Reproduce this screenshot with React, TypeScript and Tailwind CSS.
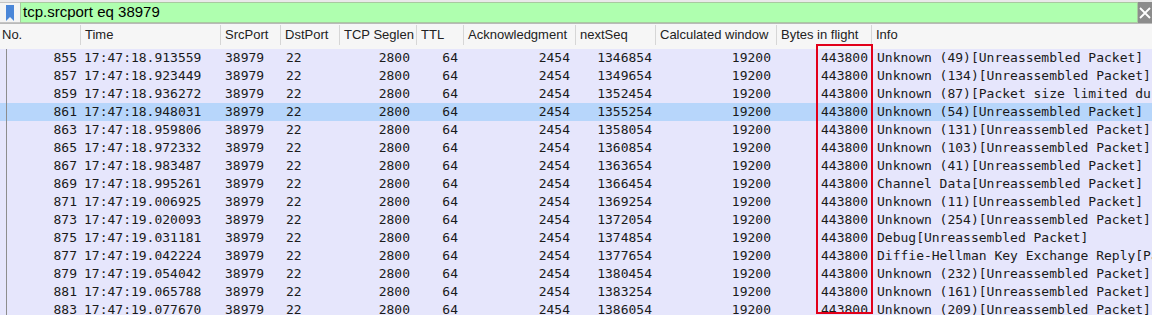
import React from "react";

type Packet = {
  no: number;
  time: string;
  ack: number;
  next: number;
  info: string;
};

const packets: Packet[] = [
  { no: 855, time: "17:47:18.913559", ack: 2454, next: 1346854, info: "Unknown (49)[Unreassembled Packet]" },
  { no: 857, time: "17:47:18.923449", ack: 2454, next: 1349654, info: "Unknown (134)[Unreassembled Packet]" },
  { no: 859, time: "17:47:18.936272", ack: 2454, next: 1352454, info: "Unknown (87)[Packet size limited du" },
  { no: 861, time: "17:47:18.948031", ack: 2454, next: 1355254, info: "Unknown (54)[Unreassembled Packet]" },
  { no: 863, time: "17:47:18.959806", ack: 2454, next: 1358054, info: "Unknown (131)[Unreassembled Packet]" },
  { no: 865, time: "17:47:18.972332", ack: 2454, next: 1360854, info: "Unknown (103)[Unreassembled Packet]" },
  { no: 867, time: "17:47:18.983487", ack: 2454, next: 1363654, info: "Unknown (41)[Unreassembled Packet]" },
  { no: 869, time: "17:47:18.995261", ack: 2454, next: 1366454, info: "Channel Data[Unreassembled Packet]" },
  { no: 871, time: "17:47:19.006925", ack: 2454, next: 1369254, info: "Unknown (11)[Unreassembled Packet]" },
  { no: 873, time: "17:47:19.020093", ack: 2454, next: 1372054, info: "Unknown (254)[Unreassembled Packet]" },
  { no: 875, time: "17:47:19.031181", ack: 2454, next: 1374854, info: "Debug[Unreassembled Packet]" },
  { no: 877, time: "17:47:19.042224", ack: 2454, next: 1377654, info: "Diffie-Hellman Key Exchange Reply[Pa" },
  { no: 879, time: "17:47:19.054042", ack: 2454, next: 1380454, info: "Unknown (232)[Unreassembled Packet]" },
  { no: 881, time: "17:47:19.065788", ack: 2454, next: 1383254, info: "Unknown (161)[Unreassembled Packet]" },
  { no: 883, time: "17:47:19.077670", ack: 2454, next: 1386054, info: "Unknown (209)[Unreassembled Packet]" },
];

const columns = [
  { label: "No.", w: "w-[80px]" },
  { label: "Time", w: "w-[140px]" },
  { label: "SrcPort", w: "w-[60px]" },
  { label: "DstPort", w: "w-[59px]" },
  { label: "TCP Seglen", w: "w-[77px]" },
  { label: "TTL", w: "w-[47px]" },
  { label: "Acknowledgment", w: "w-[112px]" },
  { label: "nextSeq", w: "w-[80px]" },
  { label: "Calculated window", w: "w-[121px]" },
  { label: "Bytes in flight", w: "w-[95px]" },
  { label: "Info", w: "flex-1" },
];

const FilterBar = () => (
  <div className="flex h-[24px] items-stretch border-b border-[#b9b9b9] bg-[#e9e9e9] pt-[2px]">
    <div className="flex w-[20px] items-center justify-center border-y border-[#c4c4c4] bg-[#f4f4f4]">
      <svg width="8" height="16" viewBox="0 0 8 16">
        <path d="M0 0 H8 V16 L4 12 L0 16 Z" fill="#4a86d8" />
      </svg>
    </div>
    <div className="flex flex-1 items-center border border-[#a9c9a0] bg-[#afffaf] pl-[2px] text-[15px] text-black">
      tcp.srcport eq 38979
    </div>
    <div className="flex w-[14px] items-center justify-center bg-[#8c8c8c]">
      <svg width="12" height="12" viewBox="0 0 12 12">
        <path d="M1 1 L11 11 M11 1 L1 11" stroke="#fff" strokeWidth="1.8" />
      </svg>
    </div>
  </div>
);

const Header = () => (
  <div className="flex h-[25px] items-start bg-[#f6f6f6] pt-[1px] text-[13px] text-[#222]">
    {columns.map((c, i) => (
      <div
        key={c.label}
        className={`${c.w} flex h-[20px] items-center whitespace-nowrap ${
          i === 0 ? "pl-[2px]" : "border-l border-[#d6d6d6] pl-[4px]"
        }`}
      >
        {c.label}
      </div>
    ))}
  </div>
);

const Row = ({ p, selected }: { p: Packet; selected: boolean }) => (
  <div
    className={`flex h-[18px] items-center whitespace-nowrap ${
      selected ? "bg-[#b7d6fb]" : "bg-[#e6e6fc]"
    }`}
  >
    <div className="relative flex h-full w-[80px] items-center justify-end pr-[3px]">
      <div className="absolute top-0 left-[6px] h-full w-px bg-[#8d8d8d]" />
      {p.no}
    </div>
    <div className="w-[140px] pl-[4px]">{p.time}</div>
    <div className="w-[60px] pl-[5px]">38979</div>
    <div className="w-[59px] pl-[6px]">22</div>
    <div className="w-[77px] pr-[6px] text-right">2800</div>
    <div className="w-[47px] pr-[5px] text-right">64</div>
    <div className="w-[112px] pr-[5px] text-right">{p.ack}</div>
    <div className="w-[80px] pr-[3px] text-right">{p.next}</div>
    <div className="w-[121px] pr-[5px] text-right">19200</div>
    <div className="w-[95px] pr-[3px] text-right">443800</div>
    <div className="flex-1 overflow-hidden pl-[6px]">{p.info}</div>
  </div>
);

export default function App() {
  return (
    <div className="h-[315px] w-[1152px] overflow-hidden bg-white font-['Liberation_Sans',sans-serif]">
      <FilterBar />
      <Header />
      <div className="relative font-['DejaVu_Sans_Mono',monospace] text-[13px] text-[#1a1a1a]">
        {packets.map((p) => (
          <Row key={p.no} p={p} selected={p.no === 861} />
        ))}
        <div className="pointer-events-none absolute top-[-5px] left-[816px] h-[270px] w-[57px] border-2 border-[#e2001a]" />
      </div>
    </div>
  );
}
